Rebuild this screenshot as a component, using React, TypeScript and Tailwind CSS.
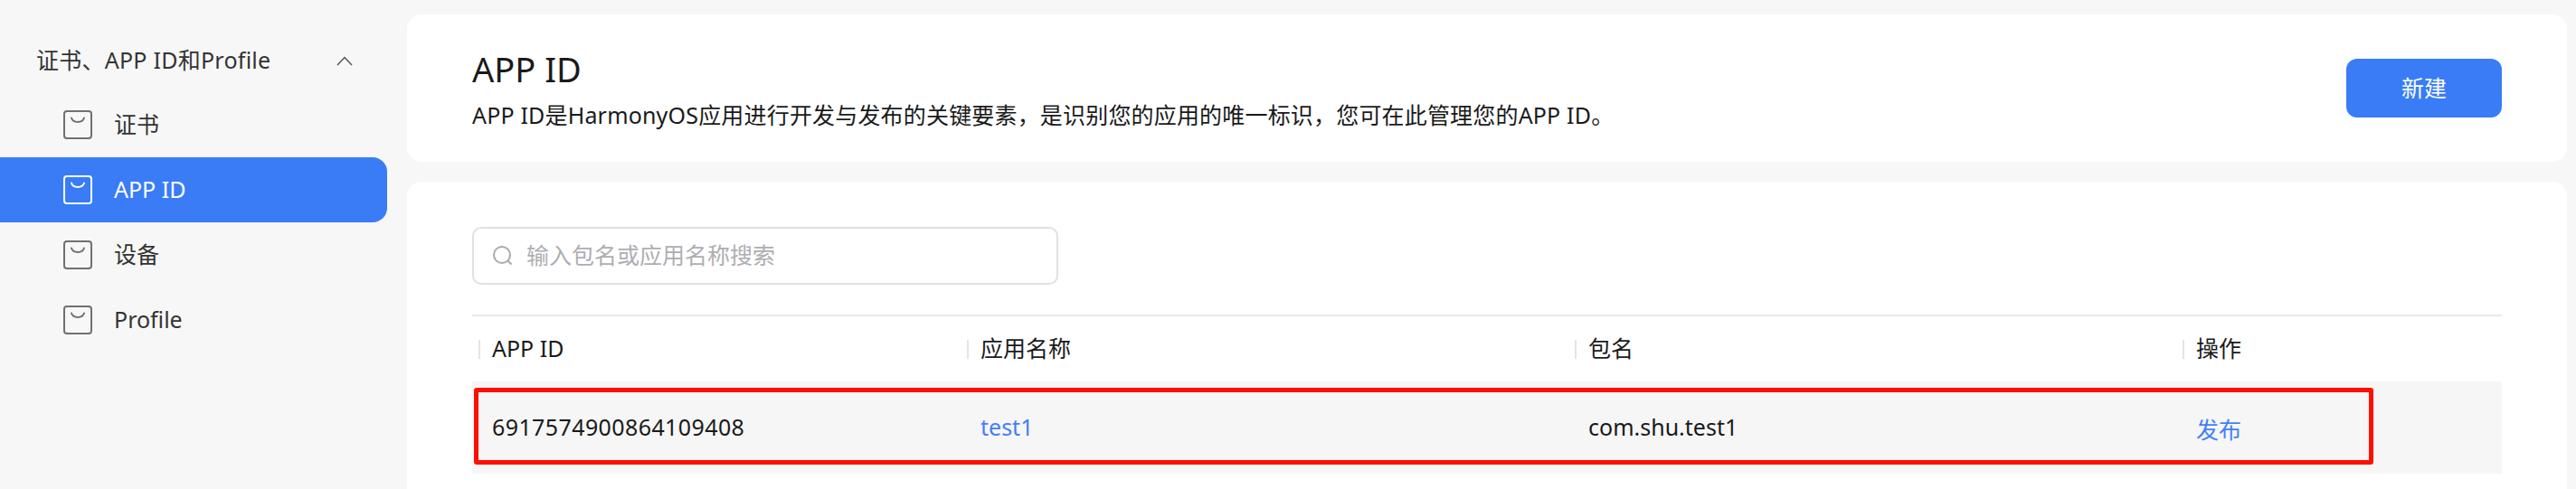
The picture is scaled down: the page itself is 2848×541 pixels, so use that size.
const FONT = "font-['Noto_Sans','Noto_Sans_CJK_SC',sans-serif]";

function BagIcon({ active }: { active?: boolean }) {
  return (
    <svg
      width="32"
      height="32"
      viewBox="0 0 32 32"
      fill="none"
      className={active ? 'shrink-0 text-white' : 'shrink-0 text-[#707070]'}
      stroke="currentColor"
      strokeWidth="2"
    >
      <rect x="1" y="1" width="30" height="30" rx="3" />
      <path d="M9 8.500c1 3 3.500 4.500 7 4.500s6-1.500 7-4.500" strokeLinecap="round" />
    </svg>
  );
}

const NAV_ITEMS = ['证书', 'APP ID', '设备', 'Profile'];

function Sidebar() {
  return (
    <aside className="w-[428px] shrink-0">
      <div className="flex h-[102px] items-center justify-between pl-[40px] pr-[38px] pt-[32px] text-[25px] tracking-[0.25px] text-[#333]">
        <span>证书、APP ID和Profile</span>
        <svg width="18" height="11" viewBox="0 0 18 11" fill="none" stroke="#555" strokeWidth="1.500">
          <path d="M1 10l8-8.500 8 8.500" />
        </svg>
      </div>
      {NAV_ITEMS.map((item) => {
        const active = item === 'APP ID';
        return (
          <div
            key={item}
            className={
              active
                ? 'flex h-[72px] items-center gap-[24px] rounded-r-[16px] bg-[#397cf6] pl-[70px] text-[25px] text-white'
                : 'flex h-[72px] items-center gap-[24px] pl-[70px] text-[25px] text-[#333]'
            }
          >
            <BagIcon active={active} />
            <span>{item}</span>
          </div>
        );
      })}
    </aside>
  );
}

function HeaderCell({ label, first }: { label: string; first?: boolean }) {
  return (
    <div className={first ? 'pl-[7px]' : ''}>
      <div className="flex h-[21px] items-center border-l-2 border-[#e4e4e4] pl-[13px] text-[25px] text-[#1a1a1a]">
        {label}
      </div>
    </div>
  );
}

function AppTable() {
  return (
    <div className="mt-[33px] border-t-2 border-[#e8e8e8]">
      <div className="grid h-[72px] grid-cols-[547px_672px_672px_1fr] items-center">
        <HeaderCell label="APP ID" first />
        <HeaderCell label="应用名称" />
        <HeaderCell label="包名" />
        <HeaderCell label="操作" />
      </div>
      <div className="relative grid h-[102px] grid-cols-[547px_672px_672px_1fr] items-center bg-[#f6f6f6] text-[25px]">
        <div className="pl-[22px] tracking-[0.4px] text-[#1a1a1a]">6917574900864109408</div>
        <div className="pl-[15px] text-[#437ff8]">test1</div>
        <div className="pl-[15px] text-[#1a1a1a]">com.shu.test1</div>
        <div className="pl-[15px] pt-[5px] text-[#437ff8]">发布</div>
        <div className="absolute left-[2px] top-[7px] h-[85px] w-[2100px] rounded-[3px] border-[5px] border-[#ff0f00]" />
      </div>
    </div>
  );
}

export default function App() {
  return (
    <div className={`flex h-[541px] overflow-hidden bg-[#f7f7f7] ${FONT}`}>
      <Sidebar />
      <main className="flex flex-1 flex-col gap-[22px] pl-[22px] pr-[10px] pt-[16px]">
        <section className="flex h-[163px] shrink-0 items-center justify-between rounded-[16px] bg-white pl-[72px] pr-[72px]">
          <div className="pt-[1px]">
            <h1 className="text-[38px] leading-[48px] text-[#1a1a1a]">APP ID</h1>
            <p className="mt-[9px] text-[25px] leading-[36px] tracking-[0.18px] text-[#1a1a1a]">
              APP ID是HarmonyOS应用进行开发与发布的关键要素，是识别您的应用的唯一标识，您可在此管理您的APP ID。
            </p>
          </div>
          <button className="h-[65px] w-[172px] rounded-[12px] bg-[#397cf6] text-[25px] text-white">新建</button>
        </section>
        <section className="flex-1 rounded-t-[16px] bg-white pl-[72px] pr-[72px] pt-[50px]">
          <div className="flex h-[64px] w-[648px] items-center gap-[14px] rounded-[10px] border-2 border-[#e0e0e4] pl-[20px]">
            <svg width="24" height="24" viewBox="0 0 24 24" fill="none" stroke="#aaaaae" strokeWidth="2">
              <circle cx="11" cy="11" r="9" />
              <path d="M17.500 17.500l4 4" />
            </svg>
            <span className="text-[25px] text-[#aeaeb2]">输入包名或应用名称搜索</span>
          </div>
          <AppTable />
        </section>
      </main>
    </div>
  );
}
